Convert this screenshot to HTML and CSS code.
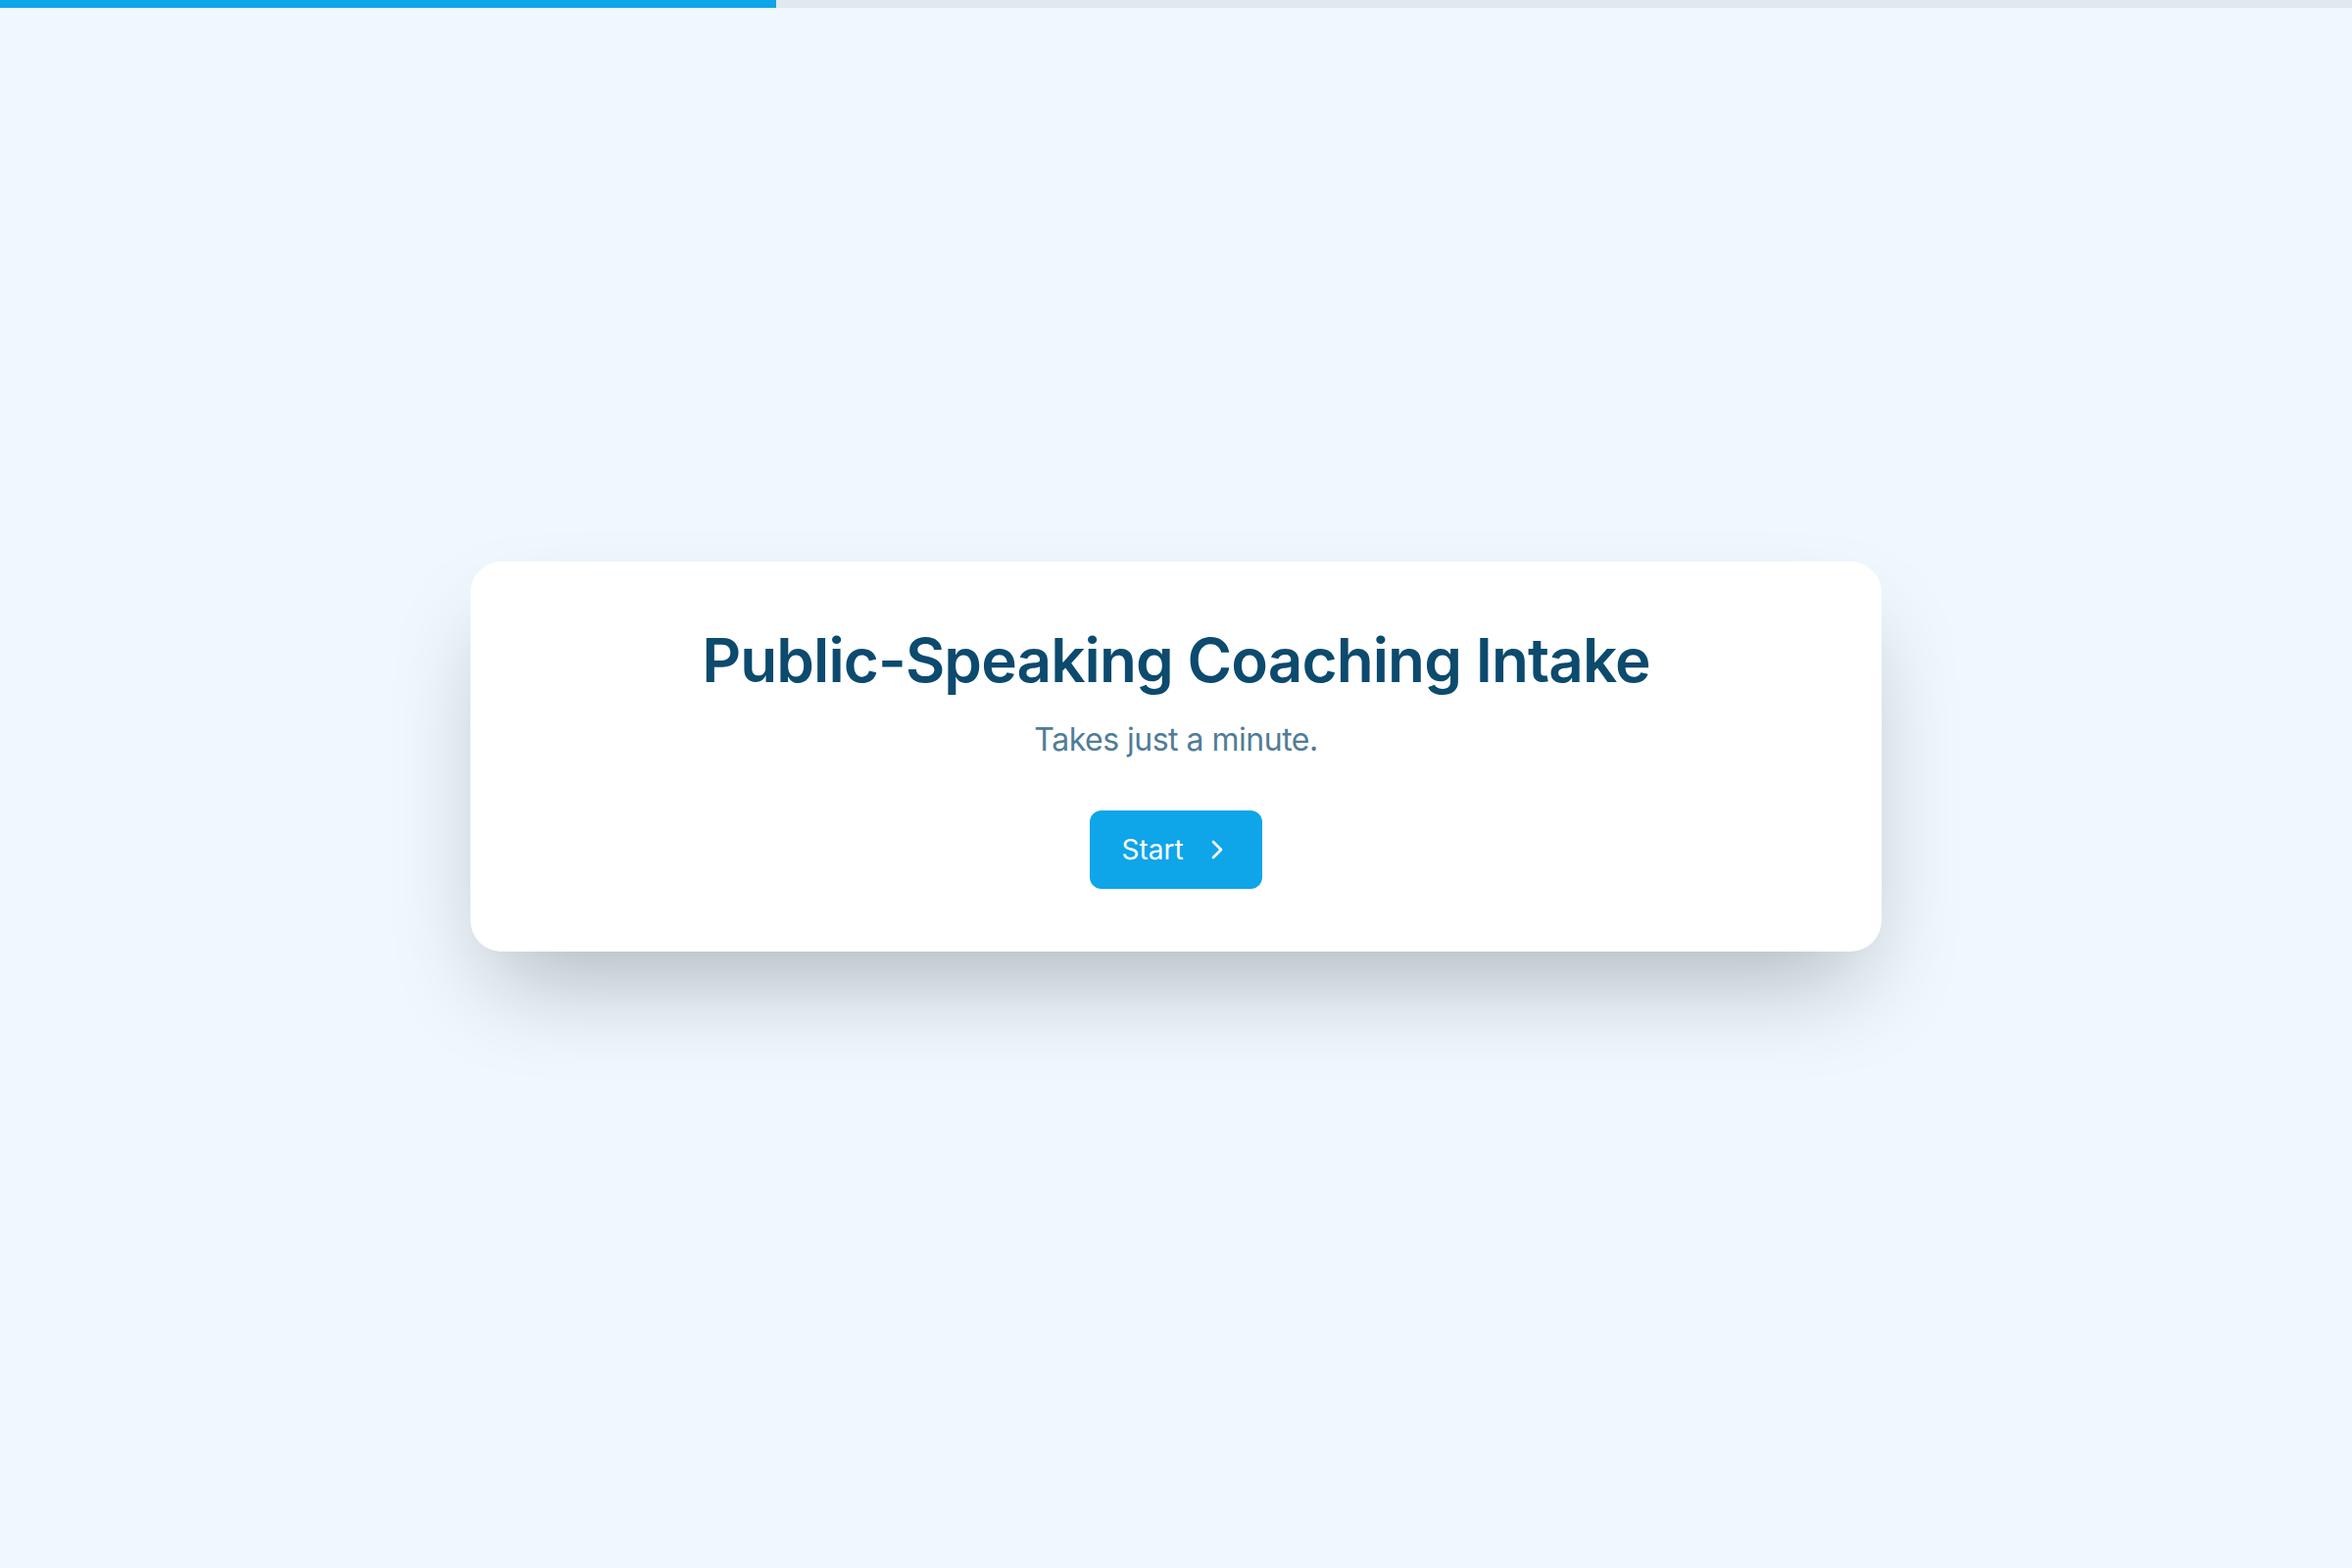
FILE: index.html
```html
<!DOCTYPE html>
<html lang="en">
<head>
<meta charset="utf-8">
<title>Public-Speaking Coaching Intake</title>
<link rel="stylesheet" href="styles.css">
</head>
<body>
<div class="progress"><div class="progress-fill" style="width:33%"></div></div>
<main class="stage">
  <section class="card">
    <h1 class="title">Public-Speaking Coaching Intake</h1>
    <p class="subtitle">Takes just a minute.</p>
    <button class="start" type="button">
      <span class="start-label">Start</span>
      <svg class="start-icon" viewBox="0 0 24 24" fill="none" stroke="currentColor" stroke-width="2" stroke-linecap="round" stroke-linejoin="round"><path d="m9 18 6-6-6-6"/></svg>
    </button>
  </section>
</main>
</body>
</html>
```
FILE: styles.css
```css
* { box-sizing: border-box; }
html, body { margin: 0; padding: 0; }
body {
  background: #f0f8ff;
  font-family: Inter, "Liberation Sans", sans-serif;
  min-height: 1600px;
}
.progress {
  height: 8px;
  background: #e2e8f0;
}
.progress-fill {
  height: 100%;
  background: #0ea5e9;
}
.stage {
  min-height: 1592px;
  display: flex;
  align-items: center;
  justify-content: center;
  padding-bottom: 64px;
}
.card {
  width: 1440px;
  background: #ffffff;
  border-radius: 32px;
  padding: 64px;
  display: flex;
  flex-direction: column;
  align-items: center;
  text-align: center;
  box-shadow: 0 50px 100px -24px rgba(0, 0, 0, 0.28);
}
.title {
  margin: 0;
  font-size: 62px;
  line-height: 1.2;
  font-weight: 600;
  color: #0c4a6e;
  letter-spacing: -0.9px;
}
.subtitle {
  margin: 21px 0 0;
  font-size: 32px;
  line-height: 1.4;
  font-weight: 400;
  color: #517c98;
  letter-spacing: -0.5px;
}
.start {
  margin-top: 49px;
  height: 80px;
  padding: 0 30px 0 32px;
  display: flex;
  align-items: center;
  gap: 18px;
  border: none;
  border-radius: 12px;
  background: #0ea5e9;
  color: #ffffff;
  font-family: inherit;
  font-size: 28px;
  font-weight: 400;
}
.start-icon {
  width: 32px;
  height: 32px;
}
```
